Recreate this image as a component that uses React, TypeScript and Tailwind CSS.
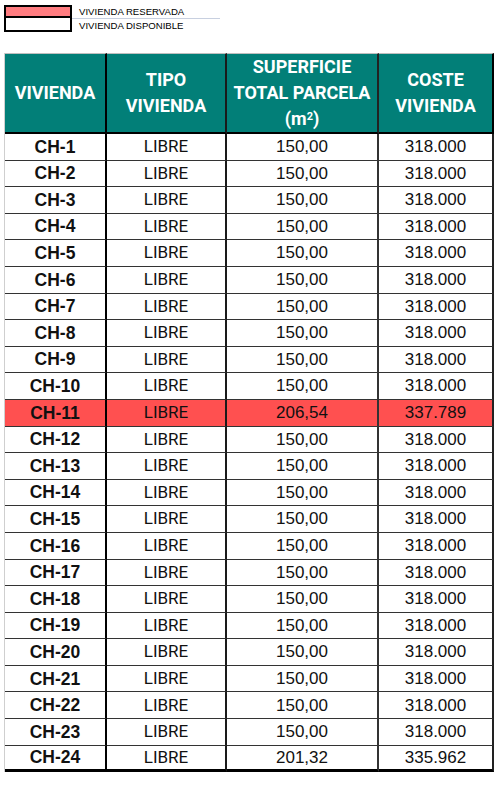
const rows: { id: string; sup: string; cost: string; reserved?: boolean }[] = Array.from({ length: 24 }, (_, i) => {
    const n = i + 1
    if (n === 11) return { id: 'CH-11', sup: '206,54', cost: '337.789', reserved: true }
    if (n === 24) return { id: 'CH-24', sup: '201,32', cost: '335.962' }
    return { id: `CH-${n}`, sup: '150,00', cost: '318.000' }
})

function Legend() {
    return (
        <div className="pt-[5px] pl-[4px] flex items-start">
            <div className="w-[68px] border-2 border-black flex flex-col">
                <div className="h-[11px] bg-[#ff7c80] border-b-2 border-black" />
                <div className="h-[12px] bg-white" />
            </div>
            <div className="flex flex-col text-[9.6px] leading-[13px] text-black font-['Liberation_Sans',Arial,sans-serif]">
                <span className="pl-[7px] h-[14px] w-[148px] border-b border-[#c8d0e0]">VIVIENDA RESERVADA</span>
                <span className="pl-[7px]">VIVIENDA DISPONIBLE</span>
            </div>
        </div>
    )
}

const head = "h-[81px] bg-[#027f78] border-t border-[#bfbfbf] border-b-2 border-b-black flex flex-col items-center justify-center text-white font-bold text-[18px] leading-[26px] font-['Roboto',sans-serif]"

export default function App() {
    return (
        <div className="w-[501px] min-h-[797px] bg-white font-['Liberation_Sans',Arial,sans-serif] text-[#111]">
            <Legend />

            <div className="mt-[21px] ml-[4px] w-[490px] border-l border-[#cfcfcf] grid grid-cols-[102px_120px_152px_115px]">
                <div className={`${head} border-r-2 border-r-black`}>VIVIENDA</div>
                <div className={`${head} border-r-2 border-r-[#1a1a1a]`}>
                    <span>TIPO</span>
                    <span>VIVIENDA</span>
                </div>
                <div className={`${head} border-r-2 border-r-[#222]`}>
                    <span>SUPERFICIE</span>
                    <span>TOTAL PARCELA</span>
                    <span className="relative">
                        (m<sup className="text-[11px]">2</sup>)
                    </span>
                </div>
                <div className={`${head} border-r-2 border-r-black`}>
                    <span>COSTE</span>
                    <span>VIVIENDA</span>
                </div>

                {rows.map((r, i) => {
                    const last = i === rows.length - 1
                    const bg = r.reserved ? 'bg-[#ff5050]' : 'bg-white'
                    const bb = last ? 'border-b-[3px] border-b-black' : 'border-b border-b-[#333]'
                    return (
                        <div key={r.id} className="contents">
                            <div className={`h-[26.6px] ${bg} ${bb} border-r-2 border-r-black flex items-center justify-center font-bold text-[17.5px]`}>
                                {r.id}
                            </div>
                            <div className={`h-[26.6px] ${bg} ${bb} border-r-2 border-r-[#1a1a1a] flex items-center justify-center text-[17px] font-['Roboto',sans-serif]`}>
                                LIBRE
                            </div>
                            <div className={`h-[26.6px] ${bg} ${bb} border-r-2 border-r-[#333] flex items-center justify-center text-[17px]`}>
                                {r.sup}
                            </div>
                            <div className={`h-[26.6px] ${bg} ${bb} border-r-2 border-r-[#222] flex items-center justify-center text-[17px]`}>
                                {r.cost}
                            </div>
                        </div>
                    )
                })}
            </div>
        </div>
    )
}
